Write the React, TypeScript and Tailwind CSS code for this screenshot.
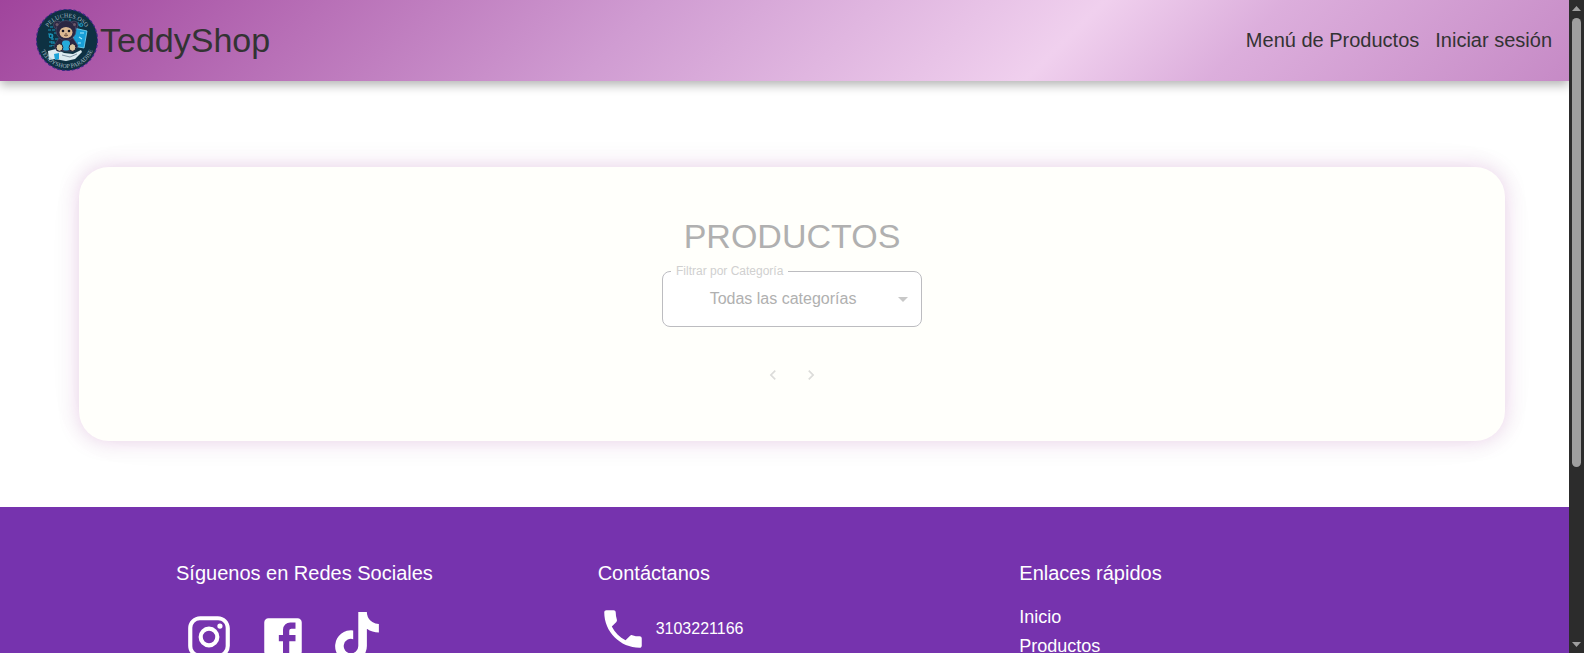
import type { ReactNode } from "react";

function TeddyLogo() {
  return (
    <svg viewBox="0 0 62 62" className="size-[62px] shrink-0" role="img" aria-label="TeddyShop">
      <defs>
        <path id="logo-top" d="M8.500 31a22.500 22.500 0 0 1 45 0" />
        <path id="logo-bottom" d="M3 31a28 28 0 0 0 56 0" />
      </defs>
      <circle cx="31" cy="31" r="30.500" fill="#0e3142" stroke="#3b2a86" strokeWidth="1.200" strokeDasharray="3 2" />
      <g fill="none" stroke="#1a93b8" strokeWidth="1.200">
        <path d="M12 21h7M12 25h4v5h4M13 33h5v4M16 28v9M20 13h3M18 24h3M42 13v4M42 16h4M13 37h4M27 10v2M34 10v2M14 18h4M19 30h3" strokeDasharray="3 1" />
        <circle cx="15" cy="27" r="1.800" />
        <circle cx="45" cy="16" r="1.500" />
      </g>
      <path d="M38 19l13 3-3 17-11-2z" fill="#189fd6" stroke="#7bdcf7" strokeWidth=".8" />
      <path d="M44 24h4M43 28l3 2M42 34h3" stroke="#a5ecff" strokeWidth="1.200" />
      <path d="M12 42l8-2 8 4 9 1 8-4 1 2-7 7-9 2-11-2-6 1z" fill="#dceaf0" />
      <path d="M18 45l5-1v6l-4 1z" fill="#1ca3d8" />
      <path d="M26 46l8 2 7-3" stroke="#8296a5" fill="none" />
      <g fill="#2b2742" stroke="#4d4a68" strokeWidth=".7">
        <circle cx="21.500" cy="16" r="4" />
        <circle cx="38" cy="16" r="4" />
        <path d="M23 29h14l5 8-4 5H21l-3-5z" />
        <circle cx="30" cy="21.500" r="10" />
      </g>
      <circle cx="21" cy="15.500" r="1.500" fill="#6b5a68" />
      <circle cx="38.500" cy="15.500" r="1.500" fill="#6b5a68" />
      <ellipse cx="30" cy="23.500" rx="6.500" ry="5.500" fill="#dbb892" />
      <circle cx="27" cy="22" r="1.300" fill="#171424" />
      <circle cx="33" cy="22" r="1.300" fill="#171424" />
      <path d="M28 26q2 2 4 0M30 24v2" stroke="#51352c" strokeWidth=".9" fill="none" />
      <rect x="26" y="31.500" width="8" height="10" rx="3" fill="#25aadc" />
      <ellipse cx="23.500" cy="38.500" rx="3.400" ry="3.800" fill="#d9c6a0" stroke="#211f35" />
      <ellipse cx="36.500" cy="38.500" rx="3.400" ry="3.800" fill="#d9c6a0" stroke="#211f35" />
      <g fill="#a4bcc4" fontFamily="Liberation Serif, serif" fontSize="6" textAnchor="middle">
        <text><textPath href="#logo-top" startOffset="50%">PELUCHES.OSO</textPath></text>
        <text><textPath href="#logo-bottom" startOffset="50%">TEDDYSHOP PARADISE</textPath></text>
      </g>
    </svg>
  );
}

function Icon({ d, className, viewBox = "0 0 24 24" }: { d: string; className: string; viewBox?: string }) {
  return (
    <svg viewBox={viewBox} fill="currentColor" aria-hidden="true" className={className}>
      <path d={d} />
    </svg>
  );
}

const icons = {
  instagram:
    "M7.8 2h8.400C19.400 2 22 4.600 22 7.800v8.400a5.800 5.800 0 0 1-5.800 5.800H7.800C4.600 22 2 19.400 2 16.200V7.800A5.800 5.800 0 0 1 7.800 2m-.2 2A3.600 3.600 0 0 0 4 7.600v8.800C4 18.390 5.610 20 7.600 20h8.800a3.600 3.600 0 0 0 3.600-3.600V7.600C20 5.610 18.390 4 16.400 4H7.600m9.650 1.500a1.250 1.250 0 1 1 0 2.500 1.250 1.250 0 0 1 0-2.500M12 7a5 5 0 1 1 0 10 5 5 0 0 1 0-10m0 2a3 3 0 1 0 0 6 3 3 0 0 0 0-6",
  facebook:
    "M5 3h14a2 2 0 0 1 2 2v14a2 2 0 0 1-2 2h-4v-7h3v-3h-3V9a1 1 0 0 1 1-1h2V5h-2.500A3.500 3.500 0 0 0 12 8.500V11h-2v3h2v7H5a2 2 0 0 1-2-2V5a2 2 0 0 1 2-2z",
  tiktok:
    "M448 209.910a210.060 210.060 0 0 1-122.770-39.250v178.720A162.550 162.550 0 1 1 185 188.310v89.890a74.620 74.620 0 1 0 52.230 71.180V0h88a121.180 121.180 0 0 0 1.860 22.170A122.180 122.180 0 0 0 381 102.390a121.430 121.430 0 0 0 67 20.140z",
  phone:
    "M6.620 10.790c1.440 2.830 3.760 5.140 6.590 6.590l2.200-2.200c.27-.27.67-.36 1.020-.24 1.120.37 2.330.57 3.570.57.55 0 1 .45 1 1V20c0 .55-.45 1-1 1-9.390 0-17-7.610-17-17 0-.55.45-1 1-1h3.500c.55 0 1 .45 1 1 0 1.250.2 2.450.57 3.570.11.35.03.74-.25 1.020z",
  previous: "M15.410 7.410 14 6l-6 6 6 6 1.410-1.410L10.830 12z",
  next: "M10 6 8.590 7.410 13.170 12l-4.580 4.590L10 18l6-6z",
};

function Header() {
  return (
    <header className="relative flex h-[81px] items-center justify-between bg-[linear-gradient(135deg,#a0449c_0%,#d09cd2_40%,#f0d0ee_67%,#dcaedc_78%,#c68ac6_100%)] pr-[17px] pb-0.5 pl-9 text-[#333] shadow-[0_4px_10px_rgba(0,0,0,0.3)]">
      <a href="#inicio" className="flex items-center gap-0.5 text-[34px] leading-10">
        <TeddyLogo />
        TeddyShop
      </a>
      <nav className="flex gap-4 text-xl">
        <a href="#productos">Menú de Productos</a>
        <a href="#sesion">Iniciar sesión</a>
      </nav>
    </header>
  );
}

function Products() {
  return (
    <main id="productos" className="w-screen px-[5vw] pt-[86px] pb-[66px]">
      <section className="flex flex-col items-center rounded-[30px] bg-[#fffffb] pt-[47px] pb-[50px] shadow-[0_0_20px_rgba(160,68,156,0.25),0_0_60px_rgba(160,68,156,0.02)]">
        <h1 className="text-[34px] leading-[44px] text-[#b0b0b0]">PRODUCTOS</h1>
        <div className="relative mt-[7px] w-[260px]">
          <fieldset className="h-[62px] rounded-lg border border-[#bcbcc0] bg-white px-2">
            <legend className="h-3 px-[5px] text-xs leading-3 text-[#d0d0d0]">
              <label htmlFor="categoria">Filtrar por Categoría</label>
            </legend>
            <select id="categoria" className="h-11 w-full appearance-none bg-transparent pr-[18px] text-center text-base text-[#b0b0b0] outline-none">
              <option>Todas las categorías</option>
            </select>
          </fieldset>
          <svg viewBox="0 0 10 5" fill="#c8c8c8" aria-hidden="true" className="pointer-events-none absolute top-8 right-[14px] h-[5px] w-[10px]">
            <path d="M0 0h10L5 5z" />
          </svg>
        </div>
        <div className="mt-8 flex gap-1.5 text-[#dcdcda]">
          <button aria-label="Anterior" className="grid size-8 place-items-center">
            <Icon d={icons.previous} className="size-5" />
          </button>
          <button aria-label="Siguiente" className="grid size-8 place-items-center">
            <Icon d={icons.next} className="size-5" />
          </button>
        </div>
      </section>
    </main>
  );
}

function FooterColumn({ title, children }: { title: string; children: ReactNode }) {
  return (
    <section>
      <h2 className="text-xl leading-8">{title}</h2>
      {children}
    </section>
  );
}

function Footer() {
  return (
    <footer className="bg-[#7633ae] pt-[50px] pb-12 text-white">
      <div className="mx-auto w-full max-w-[1265px] pl-6">
        <div className="-mr-6 grid grid-cols-3">
          <FooterColumn title="Síguenos en Redes Sociales">
            <div className="mt-[17px] flex items-center">
              <a href="#instagram" aria-label="Instagram" className="grid h-[62px] w-[66px] place-items-center">
                <Icon d={icons.instagram} className="size-[50px]" />
              </a>
              <a href="#facebook" aria-label="Facebook" className="grid h-[62px] w-[82px] place-items-center">
                <Icon d={icons.facebook} className="size-[50px]" />
              </a>
              <a href="#tiktok" aria-label="TikTok" className="grid h-[62px] w-[66px] place-items-center">
                <Icon d={icons.tiktok} viewBox="-32 0 512 512" className="size-[50px]" />
              </a>
            </div>
          </FooterColumn>
          <FooterColumn title="Contáctanos">
            <a href="tel:3103221166" className="mt-[15px] flex items-center gap-2 text-base">
              <Icon d={icons.phone} className="size-[50px]" />
              3103221166
            </a>
          </FooterColumn>
          <FooterColumn title="Enlaces rápidos">
            <ul className="mt-3.5 text-lg leading-[29px]">
              <li><a href="#inicio">Inicio</a></li>
              <li><a href="#productos">Productos</a></li>
            </ul>
          </FooterColumn>
        </div>
      </div>
    </footer>
  );
}

function ScrollRail() {
  return (
    <div aria-hidden="true" className="z-10 flex w-[15px] shrink-0 flex-col items-center bg-[#2c2c2c] py-1.5">
      <svg viewBox="0 0 9 5" fill="#9f9f9f" className="h-[5px] w-[9px]"><path d="M0 5h9L4.500 0z" /></svg>
      <div className="mt-[7px] min-h-0 w-[9px] flex-1">
        <div className="h-[72%] rounded-full bg-[#9f9f9f]" />
      </div>
      <svg viewBox="0 0 9 5" fill="#9f9f9f" className="h-[5px] w-[9px]"><path d="M0 0h9L4.500 5z" /></svg>
    </div>
  );
}

export default function App() {
  return (
    <div className="flex h-screen overflow-hidden bg-white font-['Liberation_Sans',Arial,sans-serif]">
      <div className="min-w-0 flex-1 overflow-x-hidden overflow-y-auto [scrollbar-width:none]">
        <Header />
        <Products />
        <Footer />
      </div>
      <ScrollRail />
    </div>
  );
}
